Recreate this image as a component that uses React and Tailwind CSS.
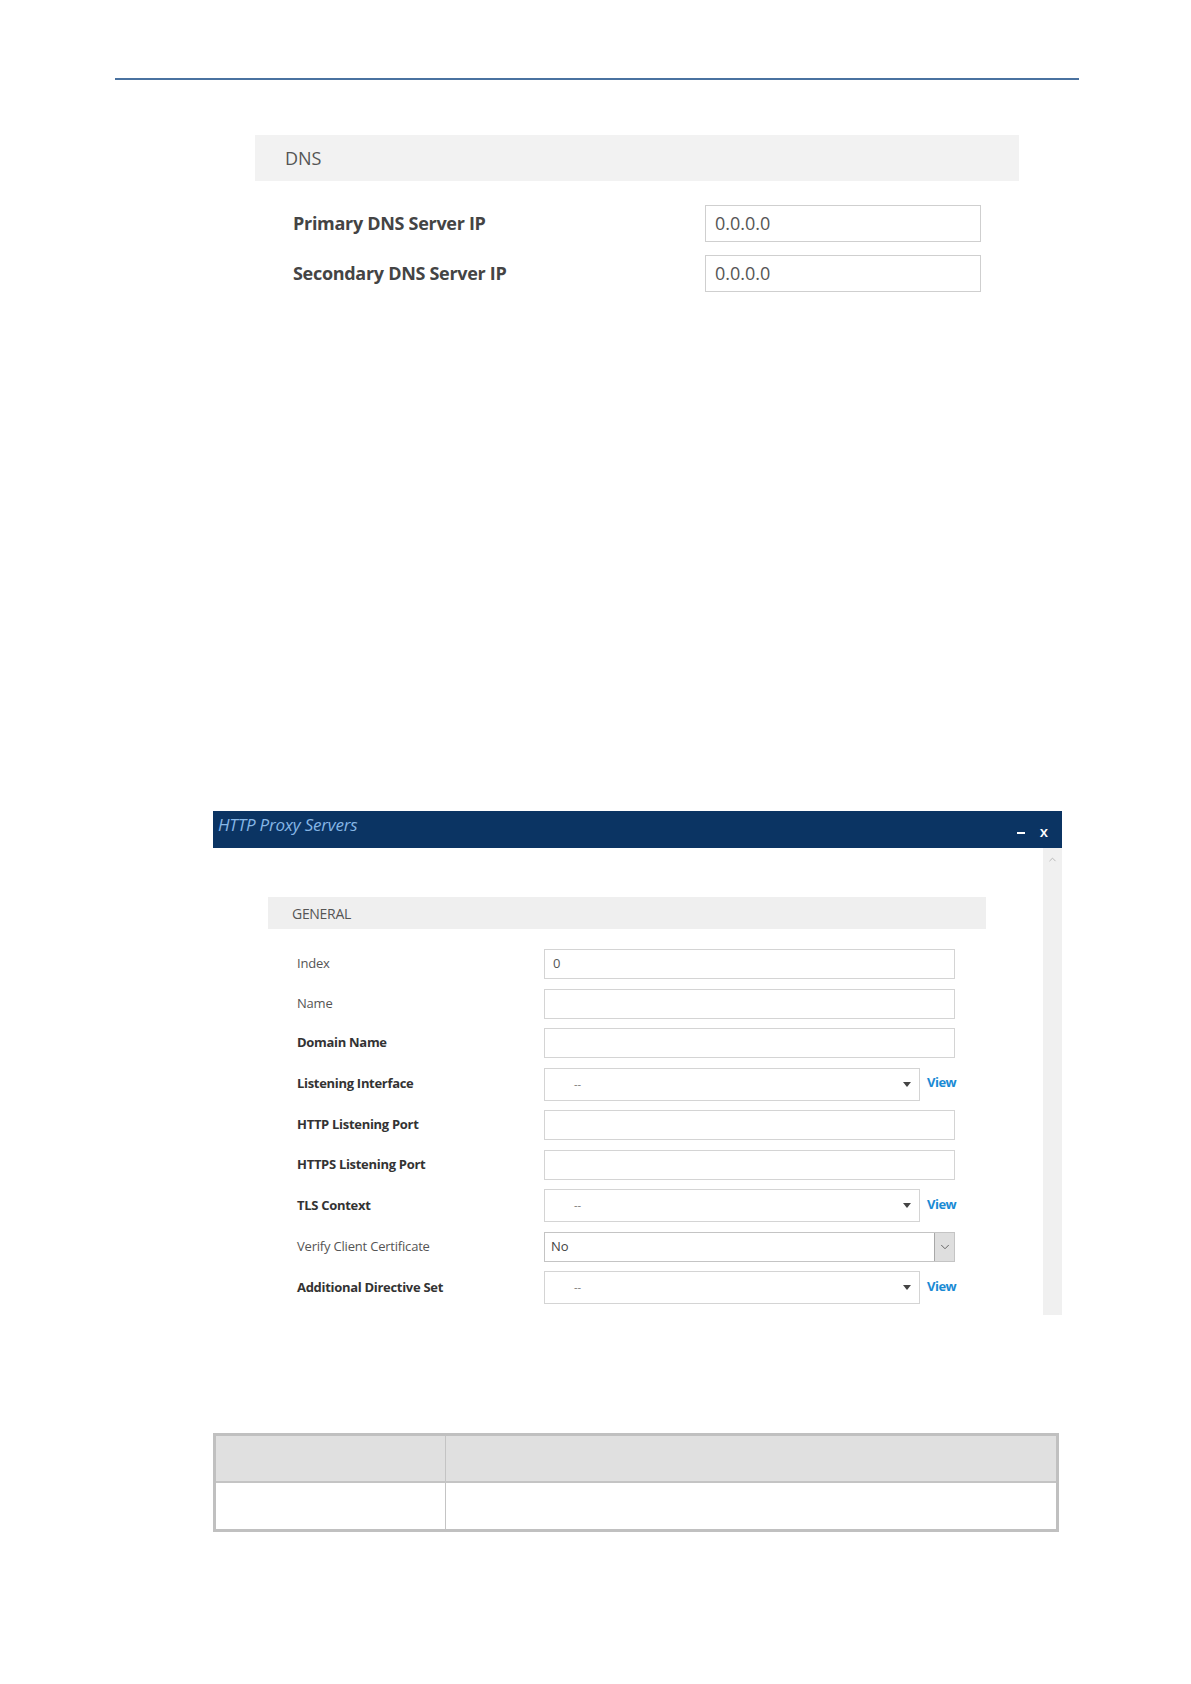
import { ChevronDown, ChevronUp } from 'lucide-react';

const ROWS = [
  { label: 'Index', bold: false, kind: 'input', value: '0' },
  { label: 'Name', bold: false, kind: 'input', value: '' },
  { label: 'Domain Name', bold: true, kind: 'input', value: '' },
  { label: 'Listening Interface', bold: true, kind: 'select', value: '--' },
  { label: 'HTTP Listening Port', bold: true, kind: 'input', value: '' },
  { label: 'HTTPS Listening Port', bold: true, kind: 'input', value: '' },
  { label: 'TLS Context', bold: true, kind: 'select', value: '--' },
  { label: 'Verify Client Certificate', bold: false, kind: 'native', value: 'No' },
  { label: 'Additional Directive Set', bold: true, kind: 'select', value: '--' },
];

function DnsRow({ label }) {
  return (
    <div className="flex h-[37px] items-center">
      <div className="w-[450px] pl-[38px] text-[18px] font-bold tracking-[-0.3px] text-[#444]">{label}</div>
      <div className="flex h-[37px] w-[276px] items-center border border-[#cfcfcf] pl-[9px] text-[18px] text-[#555]">0.0.0.0</div>
    </div>
  );
}

function Field({ row }) {
  if (row.kind === 'select') {
    return (
      <div className="flex items-center">
        <div className="flex h-[33px] w-[376px] items-center border border-[#d4d4d4] pl-[29px] pr-[8px] text-[11px] text-[#777]">
          <span className="flex-1">{row.value}</span>
          <span className="h-0 w-0 border-x-[4px] border-t-[5px] border-x-transparent border-t-[#444]" />
        </div>
        <span className="ml-[7px] -mt-[2px] text-[13px] font-bold tracking-[-0.5px] text-[#1a8ad4]">View</span>
      </div>
    );
  }
  if (row.kind === 'native') {
    return (
      <div className="flex h-[30px] w-[411px] items-center border border-[#c4c4c4] text-[13px] text-[#444]">
        <span className="flex-1 pl-[6px]">{row.value}</span>
        <span className="flex h-full w-[20px] items-center justify-center border-l border-[#a8a8a8] bg-[#dedede]">
          <ChevronDown className="size-[14px] text-[#555]" strokeWidth={1.5} aria-hidden />
        </span>
      </div>
    );
  }
  return (
    <div className="flex h-[30px] w-[411px] items-center border border-[#d4d4d4] pl-[8px] text-[13px] text-[#555]">
      {row.value}
    </div>
  );
}

export default function App() {
  return (
    <div className="relative h-[1684px] w-[1191px] overflow-hidden bg-white font-['Open_Sans',sans-serif]">
      <div className="ml-[115px] mt-[78px] h-[2px] w-[964px] bg-[#4a72a0]" />

      <section className="ml-[255px] mt-[55px] w-[764px]">
        <div className="flex h-[46px] items-center bg-[#f2f2f2] pl-[30px] text-[18px] text-[#555]">DNS</div>
        <div className="mt-[24px] flex flex-col gap-[13px]">
          <DnsRow label="Primary DNS Server IP" />
          <DnsRow label="Secondary DNS Server IP" />
        </div>
      </section>

      <section className="ml-[213px] mt-[519px] w-[849px]">
        <div className="flex h-[37px] items-start justify-between bg-[#0b3463]">
          <span className="pl-[5px] pt-[1px] text-[17px] italic tracking-[-0.2px] text-[#86b6e6]">HTTP Proxy Servers</span>
          <div className="flex items-center gap-[15px] pr-[14px] pt-[9px] text-[15px] font-semibold text-white">
            <span className="mt-[3px] block h-[2px] w-[8px] bg-white" />
            <span>x</span>
          </div>
        </div>
        <div className="flex h-[467px]">
          <div className="flex-1 pl-[55px] pt-[49px]">
            <div className="flex h-[32px] w-[718px] items-center bg-[#efefef] pl-[24px] text-[14px] tracking-[-0.3px] text-[#555]">
              GENERAL
            </div>
            <div className="mt-[20px] flex flex-col gap-[9.5px]">
              {ROWS.map((row) => (
                <div key={row.label} className="flex items-center">
                  <div
                    className={
                      row.bold
                        ? 'w-[276px] pl-[29px] text-[13px] font-bold tracking-[-0.3px] text-[#333]'
                        : 'w-[276px] pl-[29px] text-[13px] tracking-[-0.2px] text-[#555]'
                    }
                  >
                    {row.label}
                  </div>
                  <Field row={row} />
                </div>
              ))}
            </div>
          </div>
          <div className="flex w-[19px] justify-center bg-[#f0f0f0] pt-[6px]">
            <ChevronUp className="size-[11px] text-[#b4b4b4]" strokeWidth={2} aria-hidden />
          </div>
        </div>
      </section>

      <section className="ml-[213px] mt-[118px] w-[846px]">
        <div className="grid grid-cols-[230px_1fr] border-[3px] border-[#c0c0c0]">
          <div className="h-[47px] border-b-2 border-r border-[#c4c4c4] bg-[#e0e0e0]" />
          <div className="h-[47px] border-b-2 border-[#c4c4c4] bg-[#e0e0e0]" />
          <div className="h-[46px] border-r border-[#c4c4c4] bg-white" />
          <div className="h-[46px] bg-white" />
        </div>
      </section>
    </div>
  );
}
